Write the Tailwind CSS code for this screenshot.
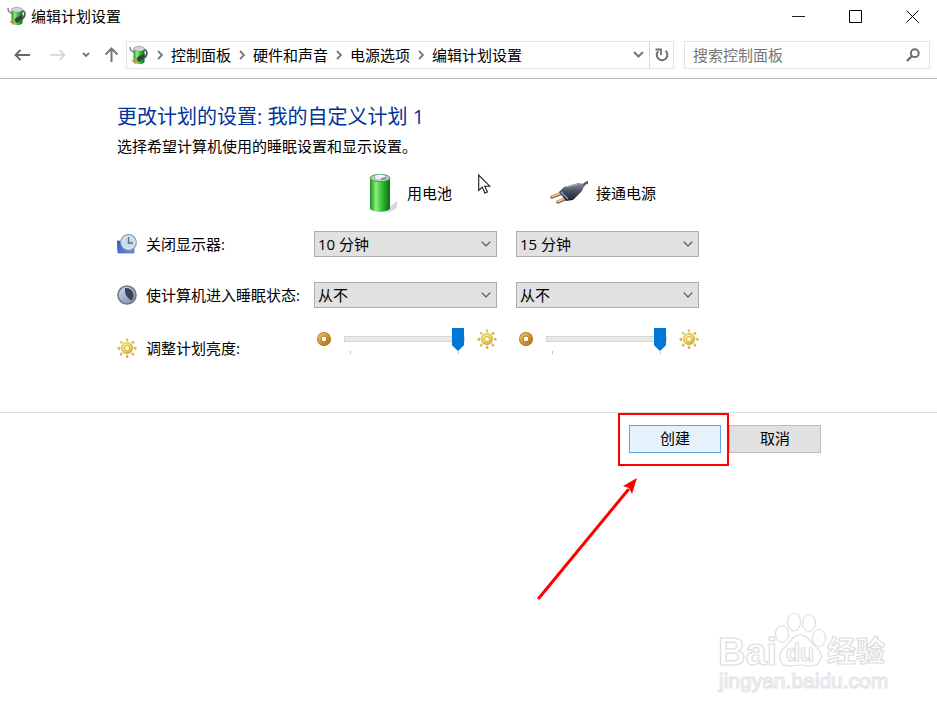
<!DOCTYPE html>
<html lang="zh-CN">
<head>
    <meta charset="utf-8">
    <title>编辑计划设置</title>
    <script src="https://cdn.jsdelivr.net/npm/@tailwindcss/browser@4"></script>
</head>
<body class="relative min-h-screen overflow-hidden bg-white font-['Open_Sans','Noto_Sans_CJK_SC',sans-serif] text-[15px] leading-5 text-black">

    <!-- shared icons -->
    <svg class="absolute size-0">
        <defs>
            <linearGradient id="green" x1="0" x2="1">
                <stop offset="0" stop-color="#1d8f22"/><stop offset=".3" stop-color="#8df07c"/><stop offset=".6" stop-color="#35bd35"/><stop offset="1" stop-color="#0b6d14"/>
            </linearGradient>
            <linearGradient id="plugBody" x1="0" y1="0" x2="0" y2="1">
                <stop offset="0" stop-color="#8b91a3"/><stop offset=".5" stop-color="#454b5e"/><stop offset="1" stop-color="#191c29"/>
            </linearGradient>
            <linearGradient id="blueScreen" x1="0" y1="0" x2="1" y2="1">
                <stop offset="0" stop-color="#2c55bd"/><stop offset="1" stop-color="#6b95ee"/>
            </linearGradient>
            <radialGradient id="gold" cx=".4" cy=".35" r=".7">
                <stop offset="0" stop-color="#fff6b0"/><stop offset=".6" stop-color="#f2d65a"/><stop offset="1" stop-color="#c59a28"/>
            </radialGradient>
            <linearGradient id="bronze" x1="0" y1="0" x2="1" y2="1">
                <stop offset="0" stop-color="#e8b95a"/><stop offset="1" stop-color="#b87413"/>
            </linearGradient>
            <linearGradient id="moon" x1="0" y1="0" x2="1" y2="1">
                <stop offset="0" stop-color="#d5def5"/><stop offset="1" stop-color="#7382ae"/>
            </linearGradient>
        </defs>
        <symbol id="power" viewBox="0 0 20 20">
            <path d="M1 2c0 4 2 5 5 5" fill="none" stroke="#8b8f9c" stroke-width="1.6"/>
            <path d="M14 5c5-1 5 5 1 8" fill="none" stroke="#50506e" stroke-width="1.7"/>
            <path d="M4.500 4v12.500c0 3.500 11 3.500 11 0V4z" fill="url(#green)"/>
            <ellipse cx="10" cy="3.800" rx="5.500" ry="2.500" fill="#cfd5da" stroke="#7f9487" stroke-width=".6"/>
            <path d="M7 14l3-3 6-2-1 4-5 4-2-1z" fill="#3a4044"/>
            <path d="M3 16l5-2M5 18l4-2" stroke="#c49a58" stroke-width="1.400"/>
        </symbol>
        <symbol id="sun" viewBox="0 0 20 20">
            <g stroke="#dfc65c" stroke-width="2.400" stroke-linecap="round">
                <path d="M10 1.500v.8M10 17.700v.8M1.500 10h.8M17.700 10h.8M4 4l.6.6M15.400 15.400l.6.6M4 16l.6-.6M15.400 4.600l.6-.6"/>
            </g>
            <g stroke="#9c8434" stroke-width=".9" stroke-linecap="round">
                <path d="M11 19h-1M19 11h-.6M16.500 16.800h-.6M4.500 17h-.6M2.400 11.200h-.8M17 4.800h-.6"/>
            </g>
            <circle cx="10" cy="10" r="5.600" fill="url(#gold)" stroke="#c9a63c" stroke-width=".7"/>
            <circle cx="10" cy="10" r="2.600" fill="#fffbe6" stroke="#d0a83a" stroke-width=".9"/>
        </symbol>
        <symbol id="dim" viewBox="0 0 16 16">
            <circle cx="8" cy="8" r="4.700" fill="none" stroke="#a56a1c" stroke-width="4.600"/>
            <circle cx="8" cy="8" r="4.700" fill="none" stroke="url(#bronze)" stroke-width="3.600"/>
        </symbol>
        <symbol id="crumb" viewBox="0 0 6 10">
            <path d="M1 1l4 4-4 4" fill="none" stroke="#777" stroke-width="1.800"/>
        </symbol>
        <symbol id="drop" viewBox="0 0 10 6">
            <path d="M.7.7L5 5 9.300.7" fill="none" stroke="#505050" stroke-width="1.200"/>
        </symbol>
    </svg>

    <header class="border-b border-[#b9b9b9]">
        <div class="flex h-[34px] items-center pr-[18px] pb-[2px] pl-[7px]">
            <svg class="mr-1 size-5"><use href="#power"/></svg>
            <span class="flex-1">编辑计划设置</span>
            <div class="flex gap-11">
                <button type="button" aria-label="最小化"><svg class="size-[13px]" viewBox="0 0 13 13"><path d="M0 6.500h13" stroke="#222"/></svg></button>
                <button type="button" aria-label="最大化"><svg class="size-[13px]" viewBox="0 0 13 13"><path d="M.5.5h12v12H.5z" fill="none" stroke="#000"/></svg></button>
                <button type="button" aria-label="关闭"><svg class="size-[13px]" viewBox="0 0 13 13"><path d="M.5.5l12 12M12.500.5l-12 12" stroke="#000"/></svg></button>
            </div>
        </div>

        <nav class="flex h-11 items-center pr-[7px] pb-[3px] pl-[14px]">
            <button type="button" aria-label="后退"><svg class="h-3 w-4" viewBox="0 0 16 12"><path d="M16 6H1.500M6.500 1l-5 5 5 5" fill="none" stroke="#666" stroke-width="1.800"/></svg></button>
            <button type="button" aria-label="前进" class="ml-5"><svg class="h-3 w-4" viewBox="0 0 16 12"><path d="M0 6h14.500M9.500 1l5 5-5 5" fill="none" stroke="#d2d2d2" stroke-width="1.600"/></svg></button>
            <button type="button" aria-label="最近位置" class="ml-4"><svg class="h-[6px] w-2" viewBox="0 0 8 6"><path d="M1 1l3 3 3-3" fill="none" stroke="#777" stroke-width="1.800"/></svg></button>
            <button type="button" aria-label="向上" class="ml-[14px]"><svg class="size-[15px]" viewBox="0 0 15 15"><path d="M7.500 15V1.500M1.500 7.500l6-6 6 6" fill="none" stroke="#777" stroke-width="2"/></svg></button>

            <div class="ml-[7px] flex h-7 flex-1 items-center border border-[#e3e3e3] pl-[2px]">
                <svg class="size-5"><use href="#power"/></svg>
                <div class="ml-2 flex flex-1 items-center gap-2 whitespace-nowrap">
                    <svg class="h-[10px] w-[6px]"><use href="#crumb"/></svg>
                    <a href="#">控制面板</a>
                    <svg class="h-[10px] w-[6px]"><use href="#crumb"/></svg>
                    <a href="#">硬件和声音</a>
                    <svg class="h-[10px] w-[6px]"><use href="#crumb"/></svg>
                    <a href="#">电源选项</a>
                    <svg class="h-[10px] w-[6px]"><use href="#crumb"/></svg>
                    <a href="#">编辑计划设置</a>
                </div>
                <button type="button" aria-label="历史记录" class="mr-[5px]"><svg class="h-[7px] w-[11px]" viewBox="0 0 11 7"><path d="M1 1l4.500 4.500L10 1" fill="none" stroke="#777" stroke-width="2"/></svg></button>
                <button type="button" aria-label="刷新" class="flex h-full w-6 items-center justify-center border-l border-[#d9d9d9]">
                    <svg class="size-[14px]" viewBox="0 0 14 14"><path d="M10.500 2.800a5.300 5.300 0 1 1-7.200.3" fill="none" stroke="#707070" stroke-width="2"/><path d="M.5 1.500h5.500v5.500" fill="none" stroke="#707070" stroke-width="1.800"/></svg>
                </button>
            </div>

            <div class="ml-[10px] flex h-7 w-[246px] items-center border border-[#e3e3e3] pr-[9px] pl-2">
                <input type="text" aria-label="搜索控制面板" placeholder="搜索控制面板" class="min-w-0 flex-1 outline-none placeholder:text-[#757575]">
                <svg class="size-[14px]" viewBox="0 0 14 14"><circle cx="8.800" cy="5.200" r="3.900" fill="none" stroke="#707070" stroke-width="2"/><path d="M6 8l-5 5" stroke="#707070" stroke-width="2.400"/></svg>
            </div>
        </nav>
    </header>

    <form>
        <main class="px-[117px] pt-[23px] pb-[41px]">
            <h1 class="text-xl leading-[30px] text-[#003399]">更改计划的设置: 我的自定义计划 1</h1>
            <p class="mt-1">选择希望计算机使用的睡眠设置和显示设置。</p>

            <div class="mt-[11px] grid auto-rows-[51px] grid-cols-[178px_183px_183px] items-center gap-x-[19px] whitespace-nowrap">
                <div></div>
                <div class="flex items-center gap-[6px] pl-[47px]">
                    <svg class="size-10" viewBox="0 0 40 40">
                        <path d="M26 36l10-8v6q-3 5-10 5z" fill="#c9c9c9" opacity=".7"/>
                        <path d="M9 5v30c0 5 20 5 20 0V5z" fill="url(#green)"/>
                        <ellipse cx="19" cy="5" rx="10" ry="3.600" fill="#b9c9c1" stroke="#46a653"/>
                        <ellipse cx="19" cy="4" rx="5" ry="2.500" fill="#edf0f4"/>
                        <path d="M20 5l5-1v2l-5 1z" fill="#8f88a8"/>
                    </svg>
                    <span>用电池</span>
                </div>
                <div class="flex items-center gap-[6px] pl-[34px]">
                    <svg class="size-10" viewBox="0 0 40 40">
                        <path d="M2 24l10-4M8 29l9-4" stroke="#7e5a34" stroke-width="3.400" stroke-linecap="round"/>
                        <path d="M2 23.500l10-4M8 28.500l9-4" stroke="#e9bd87" stroke-width="2" stroke-linecap="round"/>
                        <path d="M9 19l5-5 14-4 7 1-3 7-9 9-7 1z" fill="url(#plugBody)"/>
                        <path d="M33 11q2-3 5-3v3q-3 0-4 3z" fill="#5b5f5e"/>
                        <path d="M11 19l7 7" stroke="#9fa4b3" stroke-width="1.200"/>
                        <path d="M16 14l12-3" stroke="#b3b8c6"/>
                    </svg>
                    <span>接通电源</span>
                </div>

                <div class="flex items-center gap-[9px]">
                    <svg class="size-5 shrink-0" viewBox="0 0 20 20">
                        <path d="M0 7h17v12H1z" fill="url(#blueScreen)" stroke="#3158b5" stroke-width=".6"/>
                        <circle cx="11.500" cy="8.500" r="7.800" fill="#dce8f2" stroke="#8c9eb2" stroke-width="1.200"/>
                        <circle cx="11.500" cy="8.500" r="5.600" fill="#c6dbea"/>
                        <path d="M11.500 3v6h4.500" fill="none" stroke="#56718d" stroke-width="1.300"/>
                    </svg>
                    <span id="display">关闭显示器:</span>
                </div>
                <div class="relative">
                    <select aria-labelledby="display" class="block h-[26px] w-full appearance-none border border-[#adadad] bg-[#e1e1e1] pl-[3px]"><option>10 分钟</option></select>
                    <svg class="pointer-events-none absolute top-[10px] right-[6px] h-[6px] w-[10px]"><use href="#drop"/></svg>
                </div>
                <div class="relative">
                    <select aria-labelledby="display" class="block h-[26px] w-full appearance-none border border-[#adadad] bg-[#e1e1e1] pl-[3px]"><option>15 分钟</option></select>
                    <svg class="pointer-events-none absolute top-[10px] right-[6px] h-[6px] w-[10px]"><use href="#drop"/></svg>
                </div>

                <div class="flex items-center gap-[9px]">
                    <svg class="size-5 shrink-0" viewBox="0 0 20 20">
                        <circle cx="10" cy="10" r="9" fill="url(#moon)" stroke="#747986" stroke-width="1.600"/>
                        <path d="M8 3a7.500 7.500 0 0 1 6.500 12.500Q7 11.500 8 3z" fill="#3e4352"/>
                    </svg>
                    <span id="sleep">使计算机进入睡眠状态:</span>
                </div>
                <div class="relative">
                    <select aria-labelledby="sleep" class="block h-[26px] w-full appearance-none border border-[#adadad] bg-[#e1e1e1] pl-[3px]"><option>从不</option></select>
                    <svg class="pointer-events-none absolute top-[10px] right-[6px] h-[6px] w-[10px]"><use href="#drop"/></svg>
                </div>
                <div class="relative">
                    <select aria-labelledby="sleep" class="block h-[26px] w-full appearance-none border border-[#adadad] bg-[#e1e1e1] pl-[3px]"><option>从不</option></select>
                    <svg class="pointer-events-none absolute top-[10px] right-[6px] h-[6px] w-[10px]"><use href="#drop"/></svg>
                </div>

                <div class="flex items-center gap-[9px] pt-1">
                    <svg class="size-5 shrink-0"><use href="#sun"/></svg>
                    <span id="bright">调整计划亮度:</span>
                </div>
                <div class="flex items-start gap-3 self-start pt-[7px] pl-[2px]">
                    <svg class="mt-1 size-4"><use href="#dim"/></svg>
                    <div class="flex-1">
                        <input type="range" value="100" aria-labelledby="bright" class="block h-6 w-full appearance-none bg-transparent [&::-webkit-slider-runnable-track]:h-[6px] [&::-webkit-slider-runnable-track]:border [&::-webkit-slider-runnable-track]:border-[#d6d6d6] [&::-webkit-slider-runnable-track]:bg-[#e7eaea] [&::-webkit-slider-thumb]:-mt-[9px] [&::-webkit-slider-thumb]:h-[23px] [&::-webkit-slider-thumb]:w-3 [&::-webkit-slider-thumb]:appearance-none [&::-webkit-slider-thumb]:bg-[#0078d7] [&::-webkit-slider-thumb]:[clip-path:polygon(0_0,100%_0,100%_75%,50%_100%,0_75%)]">
                        <div class="flex h-[3px] justify-between px-[6px]"><i class="w-px bg-[#c4c4c4]"></i><i class="w-px bg-[#c4c4c4]"></i></div>
                    </div>
                    <svg class="mt-[2px] size-5"><use href="#sun"/></svg>
                </div>
                <div class="flex items-start gap-3 self-start pt-[7px] pl-[2px]">
                    <svg class="mt-1 size-4"><use href="#dim"/></svg>
                    <div class="flex-1">
                        <input type="range" value="100" aria-labelledby="bright" class="block h-6 w-full appearance-none bg-transparent [&::-webkit-slider-runnable-track]:h-[6px] [&::-webkit-slider-runnable-track]:border [&::-webkit-slider-runnable-track]:border-[#d6d6d6] [&::-webkit-slider-runnable-track]:bg-[#e7eaea] [&::-webkit-slider-thumb]:-mt-[9px] [&::-webkit-slider-thumb]:h-[23px] [&::-webkit-slider-thumb]:w-3 [&::-webkit-slider-thumb]:appearance-none [&::-webkit-slider-thumb]:bg-[#0078d7] [&::-webkit-slider-thumb]:[clip-path:polygon(0_0,100%_0,100%_75%,50%_100%,0_75%)]">
                        <div class="flex h-[3px] justify-between px-[6px]"><i class="w-px bg-[#c4c4c4]"></i><i class="w-px bg-[#c4c4c4]"></i></div>
                    </div>
                    <svg class="mt-[2px] size-5"><use href="#sun"/></svg>
                </div>
            </div>
        </main>

        <footer class="flex justify-end gap-2 border-t border-[#dcdcdc] px-[116px] pt-3">
            <div class="relative">
                <button type="submit" class="block h-7 w-[92px] border border-[#5ea9e3] bg-[#e5f1fb] pb-[2px]">创建</button>
                <!-- highlight frame and arrow -->
                <div class="pointer-events-none absolute -top-3 -right-2 -bottom-[13px] -left-[11px] border-2 border-[#ff0000]"></div>
                <svg class="pointer-events-none absolute top-[52px] -left-[93px] h-[124px] w-[104px]" viewBox="0 0 104 124" fill="#ff0000">
                    <path d="M3 121L92 13" stroke="#ff0000" stroke-width="3" stroke-linecap="round"/>
                    <path d="M101 1L96 17l-3-6-6-2z"/>
                </svg>
            </div>
            <button type="button" class="h-7 w-[92px] border border-[#bcbcbc] bg-[#e1e1e1] pb-[2px]">取消</button>
        </footer>
    </form>

    <!-- mouse pointer -->
    <svg class="pointer-events-none absolute top-[174px] left-[478px] h-5 w-[13px]" viewBox="0 0 13 20"><path d="M.7 1v15.500l3.600-3.400 2.600 5.900 2.500-1.100-2.600-5.700h5z" fill="#fff" stroke="#1a1a28" stroke-width="1.100"/></svg>

    <!-- watermark -->
    <svg class="pointer-events-none absolute right-12 bottom-4 h-[90px] w-[172px] font-['Liberation_Sans','Noto_Sans_CJK_SC',sans-serif] font-bold" viewBox="0 0 172 90" fill="#fff" stroke="#dedede" stroke-width="1.200">
        <text x="1" y="57" font-size="38">Bai</text>
        <ellipse cx="65" cy="26" rx="6.500" ry="8.500"/>
        <ellipse cx="77" cy="14" rx="6.500" ry="9"/>
        <ellipse cx="92" cy="15" rx="6.500" ry="8.500"/>
        <ellipse cx="102" cy="30" rx="6.500" ry="8.500"/>
        <path d="M83 27c8 0 11 8 16 12 9 7 5 19-5 19-5 0-7-1-11-1s-7 1-11 1c-10 0-13-12-4-19 5-4 7-12 15-12z"/>
        <text x="69" y="53" font-size="23">du</text>
        <text x="110" y="54" font-size="29">经验</text>
        <text x="2" y="80" font-size="21" font-weight="400" stroke="#e4e4e4">jingyan.baidu.com</text>
    </svg>

</body>
</html>
